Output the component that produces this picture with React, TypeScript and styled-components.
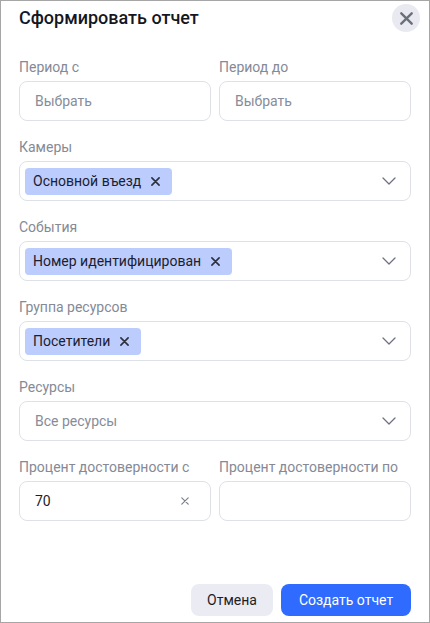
import React from "react";
import styled, {createGlobalStyle} from "styled-components";

const Global = createGlobalStyle`
    html, body {
        margin: 0;
        padding: 0;
        background: #fff;
    }
    * {
        box-sizing: border-box;
    }
`

const Root = styled.div`
    width: 430px;
    height: 623px;
    border: 1px solid #a6a6a6;
    background: #fff;
    display: flex;
    flex-direction: column;
    padding: 0 18px 6px 18px;
    font-family: Roboto, "Noto Sans", sans-serif;
    color: #1b1e27;
`

const Header = styled.div`
    height: 34px;
    display: flex;
    align-items: center;
    justify-content: space-between;
    margin-right: -9px;
`

const Title = styled.h1`
    margin: 0;
    font-size: 18px;
    font-weight: 500;
    line-height: 24px;
    color: #14171f;
`

const CloseBtn = styled.button`
    width: 28px;
    height: 28px;
    border-radius: 50%;
    border: none;
    background: #e9e9f1;
    display: flex;
    align-items: center;
    justify-content: center;
    padding: 0;
    cursor: pointer;
`

const Form = styled.div`
    margin-top: 22px;
    display: flex;
    flex-direction: column;
    gap: 16px;
`

const Row = styled.div`
    display: grid;
    grid-template-columns: 1fr 1fr;
    column-gap: 8px;
`

const Field = styled.div`
    display: flex;
    flex-direction: column;
    gap: 4px;
`

const Label = styled.div`
    font-size: 14px;
    line-height: 20px;
    color: #858a96;
    white-space: nowrap;
`

const Box = styled.div<{ $chip?: boolean, $right?: number }>`
    height: 40px;
    border: 1px solid #dfe1e8;
    border-radius: 8px;
    display: flex;
    align-items: center;
    padding: 0 ${p => p.$right ?? 14}px 0 ${p => p.$chip ? 5 : 15}px;
    font-size: 14px;
`

const Placeholder = styled.span`
    flex: 1;
    color: #878c98;
`

const Value = styled.span`
    flex: 1;
    color: #1b1e27;
`

const Chip = styled.span`
    height: 27px;
    display: inline-flex;
    align-items: center;
    gap: 10px;
    padding: 0 12px 0 8px;
    border-radius: 4px;
    background: #bccdfd;
    color: #1b2030;
    font-size: 14px;
`

const Spacer = styled.span`
    flex: 1;
`

const Footer = styled.div`
    margin-top: auto;
    display: flex;
    justify-content: flex-end;
    gap: 8px;
`

const Btn = styled.button<{ $primary?: boolean }>`
    height: 32px;
    width: ${p => p.$primary ? 130 : 82}px;
    padding: 0;
    border: none;
    border-radius: 8px;
    font-family: inherit;
    font-size: 14px;
    background: ${p => p.$primary ? "#2e6bfe" : "#ebebf3"};
    color: ${p => p.$primary ? "#fff" : "#1b1e27"};
    cursor: pointer;
`

const Cross = ({size, color, width}: { size: number, color: string, width: number }) => (
    <svg width={size} height={size} viewBox="0 0 10 10">
        <path d="M1 1L9 9M9 1L1 9" stroke={color} strokeWidth={width} strokeLinecap="round"/>
    </svg>
)

const Chevron = () => (
    <svg width="14" height="8" viewBox="0 0 14 8">
        <path d="M1 1L7 7L13 1" stroke="#6d7280" strokeWidth="1.3" fill="none" strokeLinecap="round"
              strokeLinejoin="round"/>
    </svg>
)

const Multi = ({label, chip}: { label: string, chip: string }) => (
    <Field>
        <Label>{label}</Label>
        <Box $chip>
            <Chip>{chip}<Cross size={9} color="#2c313d" width={1.8}/></Chip>
            <Spacer/>
            <Chevron/>
        </Box>
    </Field>
)

export default function App() {
    return (
        <Root>
            <Global/>
            <Header>
                <Title>Сформировать отчет</Title>
                <CloseBtn><Cross size={13} color="#6b6f7a" width={1.8}/></CloseBtn>
            </Header>
            <Form>
                <Row>
                    <Field>
                        <Label>Период с</Label>
                        <Box><Placeholder>Выбрать</Placeholder></Box>
                    </Field>
                    <Field>
                        <Label>Период до</Label>
                        <Box><Placeholder>Выбрать</Placeholder></Box>
                    </Field>
                </Row>
                <Multi label="Камеры" chip="Основной въезд"/>
                <Multi label="События" chip="Номер идентифицирован"/>
                <Multi label="Группа ресурсов" chip="Посетители"/>
                <Field>
                    <Label>Ресурсы</Label>
                    <Box>
                        <Placeholder>Все ресурсы</Placeholder>
                        <Chevron/>
                    </Box>
                </Field>
                <Row>
                    <Field>
                        <Label>Процент достоверности с</Label>
                        <Box $right={21}>
                            <Value>70</Value>
                            <Cross size={8} color="#7c808b" width={1.5}/>
                        </Box>
                    </Field>
                    <Field>
                        <Label>Процент достоверности по</Label>
                        <Box/>
                    </Field>
                </Row>
            </Form>
            <Footer>
                <Btn>Отмена</Btn>
                <Btn $primary>Создать отчет</Btn>
            </Footer>
        </Root>
    )
}
